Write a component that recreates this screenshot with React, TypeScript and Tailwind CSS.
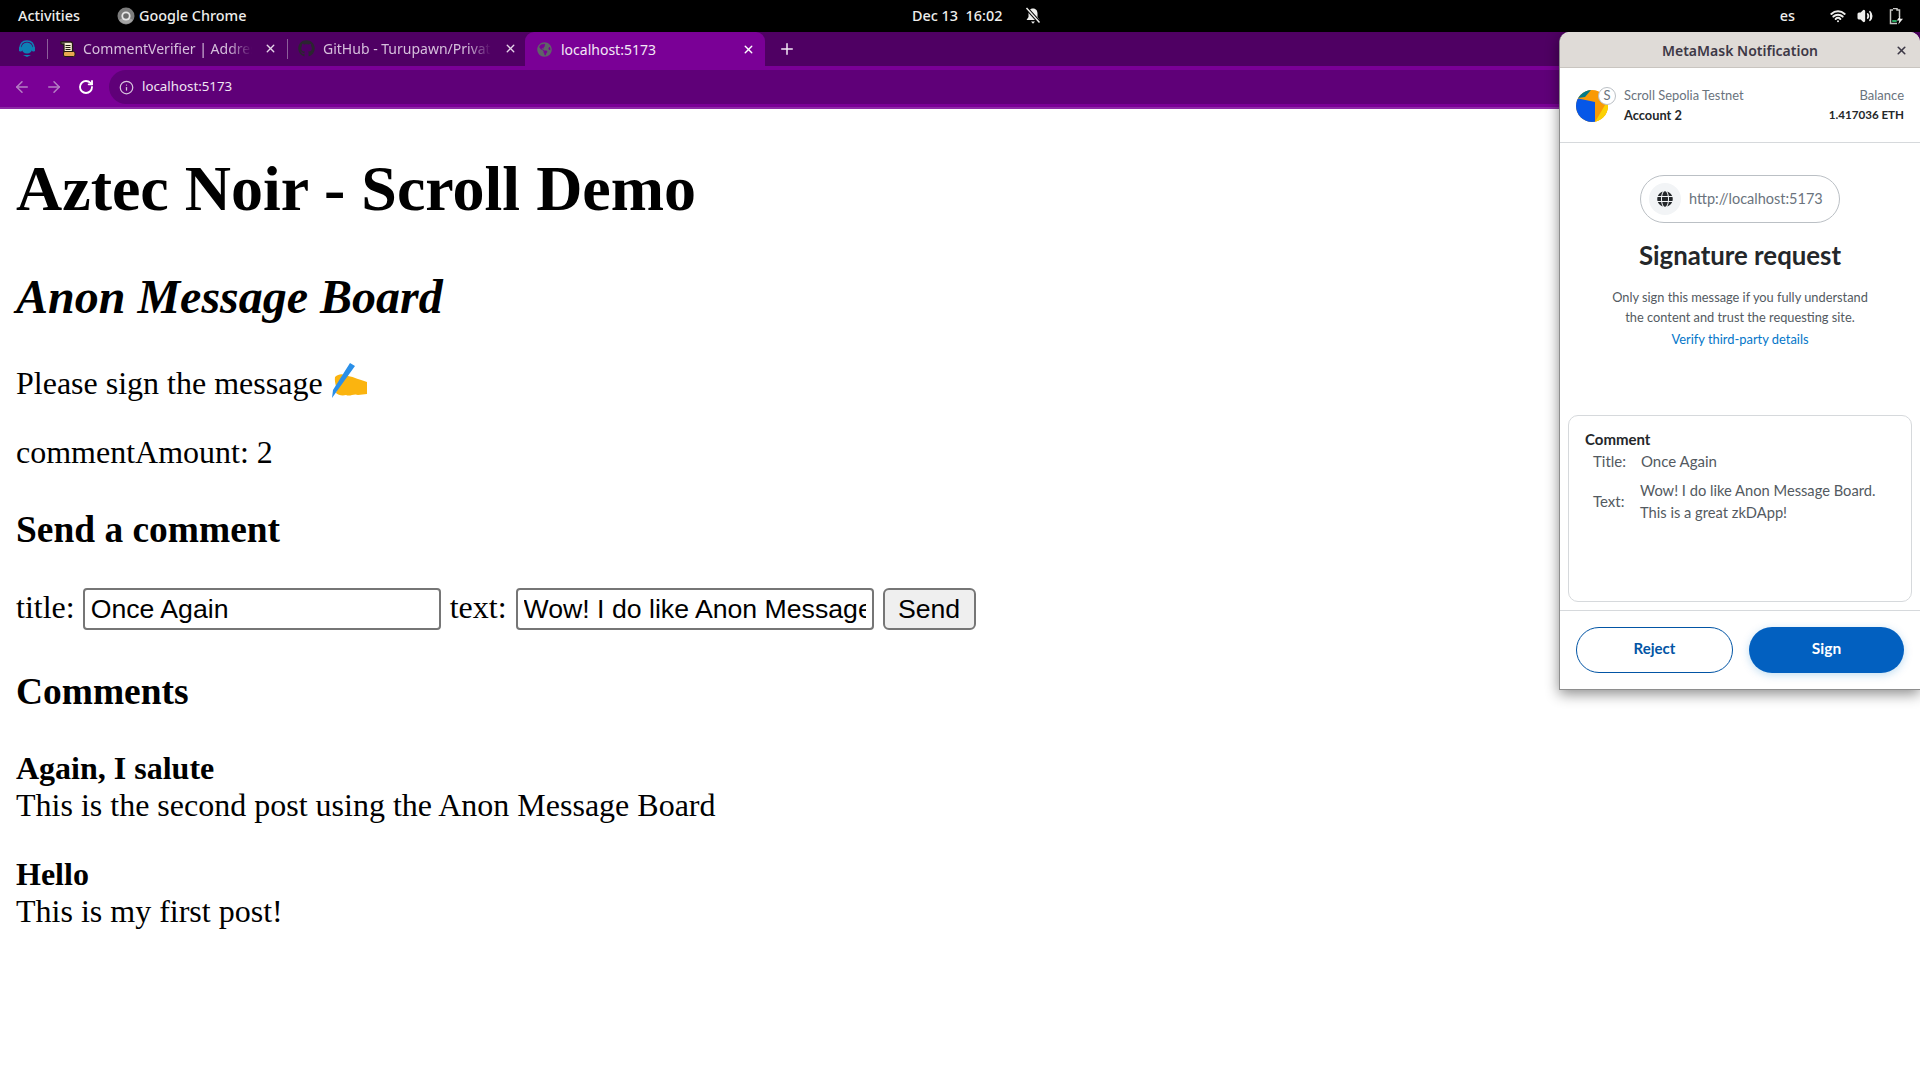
import { ArrowLeft, ArrowRight, Info, Plus, RotateCw, Volume2, Wifi, X } from "lucide-react";
import { FaGithub, FaGlobe, FaGlobeAmericas } from "react-icons/fa";

const cantarell = "font-['Noto_Sans',sans-serif]";
const euclid = "font-['Lato','Noto_Sans',sans-serif]";

function ChromeIcon() {
  return (
    <svg width="18" height="18" viewBox="0 0 18 18" className="mr-[4px]">
      <circle cx="9" cy="9" r="8.5" fill="#7c7c7c" />
      <path d="M2 13 A8.5 8.5 0 0 0 16 13 L9 9 Z" fill="#a3a3a3" />
      <circle cx="9" cy="9" r="4.6" fill="#e6e6e6" />
      <circle cx="9" cy="9" r="2.8" fill="#6b6b6b" />
    </svg>
  );
}

function MutedBell() {
  return (
    <svg width="18" height="18" viewBox="0 0 18 18">
      <path d="M9 1.5 C5.8 1.5 4.5 4 4.5 6.5 V10 L2.5 13 H15.5 L13.5 10 V6.5 C13.5 4 12.2 1.5 9 1.5 Z" fill="#eeeeec" />
      <path d="M7 14.5 H11 L9 16.8 Z" fill="#eeeeec" />
      <path d="M2 0.5 L16 16" stroke="#000" strokeWidth="3.4" />
      <path d="M2.5 1 L15.5 15.5" stroke="#eeeeec" strokeWidth="1.5" />
    </svg>
  );
}

function BatteryCharging() {
  return (
    <svg width="15" height="17" viewBox="0 0 15 17" className="mr-[16px]">
      <path d="M4 0.5 H8 V2 H10.5 V9 M4 2 H1.5 V15.5 H8" fill="none" stroke="#c9c9c7" strokeWidth="1.5" />
      <rect x="3.2" y="12.2" width="4.5" height="1.6" fill="#33d17a" />
      <path d="M11 8 L7.8 12.5 H10.3 L9.3 16.5 L14 10.8 H11.3 Z" fill="#eeeeec" />
    </svg>
  );
}

function TopBar() {
  return (
    <div className={`h-8 bg-black text-[#eeeeec] text-[14.4px] font-medium flex items-center ${cantarell}`}>
      <span className="ml-[18px] w-[99px]">Activities</span>
      <ChromeIcon />
      <span className="w-[773px]">Google Chrome</span>
      <span className="w-[112px] whitespace-pre">Dec 13  16:02</span>
      <MutedBell />
      <span className="ml-auto mr-[35px]">es</span>
      <Wifi size={16} strokeWidth={3} className="mr-[11px]" />
      <Volume2 size={16} strokeWidth={2.5} fill="#eeeeec" className="mr-[16px]" />
      <BatteryCharging />
    </div>
  );
}

function HeadsetFavicon() {
  return (
    <svg width="18" height="18" viewBox="0 0 18 18">
      <circle cx="9" cy="8" r="5.5" fill="#0e7fb5" />
      <path d="M2 9 C2 3 5 1 9 1 C13 1 16 3 16 9" fill="none" stroke="#0e7fb5" strokeWidth="1.5" />
      <rect x="1" y="6.5" width="3" height="5" rx="1.2" fill="#0e7fb5" />
      <rect x="14" y="6.5" width="3" height="5" rx="1.2" fill="#0e7fb5" />
      <path d="M5 15 H13 L9 17 Z" fill="#0e7fb5" />
    </svg>
  );
}

function ScrollFavicon() {
  return (
    <svg width="16" height="16" viewBox="0 0 16 16">
      <path d="M1 1 H11 C12 1 12.5 2 12.5 3 V11 H4 V3 H2 C1 3 0.5 2 1 1 Z" fill="#f5ecd2" stroke="#241c12" strokeWidth="1.3" />
      <path d="M5.5 4.5h5M5.5 6.5h5M5.5 8.5h5" stroke="#241c12" strokeWidth="1" />
      <rect x="3.5" y="10.5" width="11.5" height="5" rx="1.5" fill="#e8a850" stroke="#241c12" strokeWidth="1" />
    </svg>
  );
}

function TabTitle({ text, width }: { text: string; width: string }) {
  return (
    <span className={`${width} overflow-hidden whitespace-nowrap text-[14px] text-[#d6bfdc] [mask-image:linear-gradient(to_right,black_86%,transparent)]`}>
      {text}
    </span>
  );
}

function TabStrip() {
  return (
    <div className={`h-[34px] pb-px bg-[#4f0063] flex items-center text-white ${cantarell}`}>
      <div className="w-[47px] flex justify-center pl-[6px]">
        <HeadsetFavicon />
      </div>
      <div className="w-px h-5 bg-[#8d5f9b]" />
      <div className="w-[239px] flex items-center pl-3 gap-[7px]">
        <ScrollFavicon />
        <TabTitle width="w-[169px]" text="CommentVerifier | Address" />
        <X size={13} strokeWidth={2.5} className="ml-[5px] text-[#e6d5ea]" />
      </div>
      <div className="w-px h-5 bg-[#8d5f9b]" />
      <div className="w-[237px] flex items-center pl-[10px] gap-2">
        <FaGithub size={17} className="text-[#2b2530] shrink-0" />
        <TabTitle width="w-[168px]" text="GitHub - Turupawn/PrivateVoting" />
        <X size={13} strokeWidth={2.5} className="ml-[5px] text-[#e6d5ea]" />
      </div>
      <div className="w-[240px] h-[34px] mb-[-1px] bg-[#7a0096] rounded-t-[9px] flex items-center pl-[12px] pr-[10px]">
        <FaGlobeAmericas size={15} className="text-[#5f6368]" />
        <span className="ml-[9px] text-[14px] text-[#f3e8f6]">localhost:5173</span>
        <X size={13} strokeWidth={2.5} className="ml-auto text-white" />
      </div>
      <Plus size={18} strokeWidth={2} className="ml-[13px] text-[#f3e8f6]" />
    </div>
  );
}

function Toolbar() {
  return (
    <div className={`h-[43px] bg-[#7a0096] border-b-2 border-b-[#8d2aa6] flex items-center text-white ${cantarell}`}>
      <ArrowLeft size={18} strokeWidth={2} className="ml-[13px] text-[#b57fc4]" />
      <ArrowRight size={18} strokeWidth={2} className="ml-[14px] text-[#b57fc4]" />
      <RotateCw size={16} strokeWidth={2.8} className="ml-[15px] text-white" />
      <div className="ml-[15px] flex-1 h-[34px] rounded-l-[17px] bg-[#5f0078] flex items-center pl-[10px] pt-px">
        <Info size={15} strokeWidth={2} className="text-[#d8c4de]" />
        <span className="ml-[8px] text-[13.3px] text-[#f0e6f3]">localhost:5173</span>
      </div>
    </div>
  );
}

function WritingHand() {
  return (
    <svg width="37" height="37" viewBox="7 10 37 37" className="inline-block align-[-6px]">
      <path
        d="M11 24 C15 20 20 21 24 23 C30 24 36 27 43 29 L43 41 L34 42 C30 40 26 44 22 42 C18 43 14 42 12 40 C14 36 10 30 11 24 Z"
        fill="#fbb40f"
      />
      <path d="M26 10 L31 13 L13 38 L8 45 L9 37 Z" fill="#2a8fe8" />
    </svg>
  );
}

function PageContent() {
  return (
    <div className="px-4 font-['Liberation_Serif',serif] text-black text-[32px] leading-[37px]">
      <h1 className="text-[64px] leading-[74px] font-bold mt-[43px] mb-[43px]">Aztec Noir - Scroll Demo</h1>
      <h2 className="text-[48px] leading-[55px] font-bold italic mb-[39px]">Anon Message Board</h2>
      <p className="mb-[32px]">
        Please sign the message <WritingHand />
      </p>
      <p className="mb-[37px]">commentAmount: 2</p>
      <h3 className="text-[37.44px] leading-[43px] font-bold mb-[37px]">Send a comment</h3>
      <div className="flex items-baseline mb-[40px] h-[42px]">
        <span>title:</span>
        <input
          readOnly
          value="Once Again"
          className="ml-2 w-[358px] h-[42px] border-2 border-[#767676] rounded-[4px] px-[6px] text-[26.67px] font-['Liberation_Sans',sans-serif] outline-none"
        />
        <span className="ml-[9px]">text:</span>
        <input
          readOnly
          value="Wow! I do like Anon Message Board. This is a great zkDApp!"
          className="ml-[9px] w-[358px] h-[42px] border-2 border-[#767676] rounded-[4px] px-[6px] text-[26.67px] font-['Liberation_Sans',sans-serif] outline-none"
        />
        <button className="ml-[9px] w-[93px] h-[42px] bg-[#efefef] border-2 border-[#767676] rounded-[6px] text-[26.67px] font-['Liberation_Sans',sans-serif]">
          Send
        </button>
      </div>
      <h3 className="text-[37.44px] leading-[43px] font-bold mb-[37px]">Comments</h3>
      <div className="mb-[32px]">
        <div className="font-bold">Again, I salute</div>
        <div>This is the second post using the Anon Message Board</div>
      </div>
      <div>
        <div className="font-bold">Hello</div>
        <div>This is my first post!</div>
      </div>
    </div>
  );
}

function Identicon() {
  return (
    <svg width="32" height="32" viewBox="0 0 32 32">
      <defs>
        <clipPath id="ident">
          <circle cx="16" cy="16" r="16" />
        </clipPath>
      </defs>
      <g clipPath="url(#ident)">
        <rect width="32" height="32" fill="#f99a05" />
        <path d="M32 10 L19 32 H32 Z" fill="#fbd105" />
        <path d="M0 8 L19 12 V32 H0 Z" fill="#0657e8" />
        <path d="M0 0 H15 L9 7 L2 8 Z" fill="#037a87" />
      </g>
    </svg>
  );
}

function MetaMaskPopup() {
  return (
    <div className={`absolute left-[1559px] top-8 w-[361px] h-[658px] bg-white border-l border-b border-[#8e8e8e] rounded-t-[10px] shadow-[0_4px_14px_rgba(0,0,0,0.45)] flex flex-col ${euclid}`}>
      <div className={`h-9 pt-px bg-[#dfdbd7] border-b border-[#c9c5c0] rounded-t-[10px] flex items-center justify-center relative text-[14px] font-semibold text-[#3d3846] ${cantarell}`}>
        MetaMask Notification
        <X size={13} strokeWidth={3} className="absolute right-[12px] text-[#3d3846]" />
      </div>
      <div className="h-[75px] border-b border-[#d6d9dc] flex items-center pl-4 pr-4">
        <div className="relative mr-4 w-8 h-8 mt-[2px]">
          <Identicon />
          <div className="absolute -right-[8px] -top-[3px] w-[18px] h-[18px] rounded-full bg-white border border-[#bbc0c5] flex items-center justify-center text-[13px] text-[#6a737d]">
            S
          </div>
        </div>
        <div className="flex flex-col gap-[4px]">
          <span className="text-[12.9px] leading-4 text-[#6a737d]">Scroll Sepolia Testnet</span>
          <span className="text-[12.8px] leading-4 font-bold text-[#24272a]">Account 2</span>
        </div>
        <div className="ml-auto flex flex-col gap-[4px] items-end">
          <span className="text-[13px] leading-4 text-[#6a737d]">Balance</span>
          <span className="text-[11.6px] leading-4 font-bold text-[#24272a]">1.417036 ETH</span>
        </div>
      </div>
      <div className="flex flex-col items-center">
        <div className="mt-[32px] w-[200px] h-[48px] rounded-[24px] border border-[#bbc0c5] flex items-center pl-2">
          <div className="w-8 h-8 rounded-full bg-[#f2f4f6] flex items-center justify-center">
            <FaGlobe size={16} className="text-[#24272a]" />
          </div>
          <span className="ml-2 text-[14.5px] text-[#6a737d]">http://localhost:5173</span>
        </div>
        <div className="mt-[15px] text-[25.8px] leading-[34px] font-bold text-[#24272a]">Signature request</div>
        <div className="mt-[15px] text-[12.8px] leading-5 text-[#535a61] text-center">
          Only sign this message if you fully understand
          <br />
          the content and trust the requesting site.
        </div>
        <div className="mt-[2px] text-[12.9px] leading-5 text-[#0376c9]">Verify third-party details</div>
      </div>
      <div className="mt-[66px] mx-2 h-[187px] border border-[#d6d9dc] rounded-[10px] pl-4 pt-[14px] text-[15px] text-[#24272a]">
        <div className="font-bold leading-[18px]">Comment</div>
        <div className="flex mt-[3px] pl-2 leading-[20px]">
          <span className="w-[48px] text-[#535a61]">Title:</span>
          <span className="text-[#535a61]">Once Again</span>
        </div>
        <div className="flex items-center mt-[8px] pl-2 leading-[22px] text-[#535a61]">
          <span className="w-[47px]">Text:</span>
          <span className="text-[14.7px]">
            Wow! I do like Anon Message Board.
            <br />
            This is a great zkDApp!
          </span>
        </div>
      </div>
      <div className="mt-2 flex-1 border-t border-[#d6d9dc] flex gap-4 px-4 items-center">
        <button className="flex-1 h-[46px] pb-[3px] rounded-[23px] border border-[#0255a5] text-[15px] font-bold text-[#0255a5]">
          Reject
        </button>
        <button className="flex-1 h-[46px] pb-[3px] rounded-[23px] bg-[#0260c0] text-[15.5px] font-bold text-white shadow-[0_2px_8px_rgba(3,118,201,0.25)]">
          Sign
        </button>
      </div>
    </div>
  );
}

export default function App() {
  return (
    <div className="relative h-screen overflow-hidden bg-white">
      <TopBar />
      <TabStrip />
      <Toolbar />
      <PageContent />
      <MetaMaskPopup />
    </div>
  );
}
